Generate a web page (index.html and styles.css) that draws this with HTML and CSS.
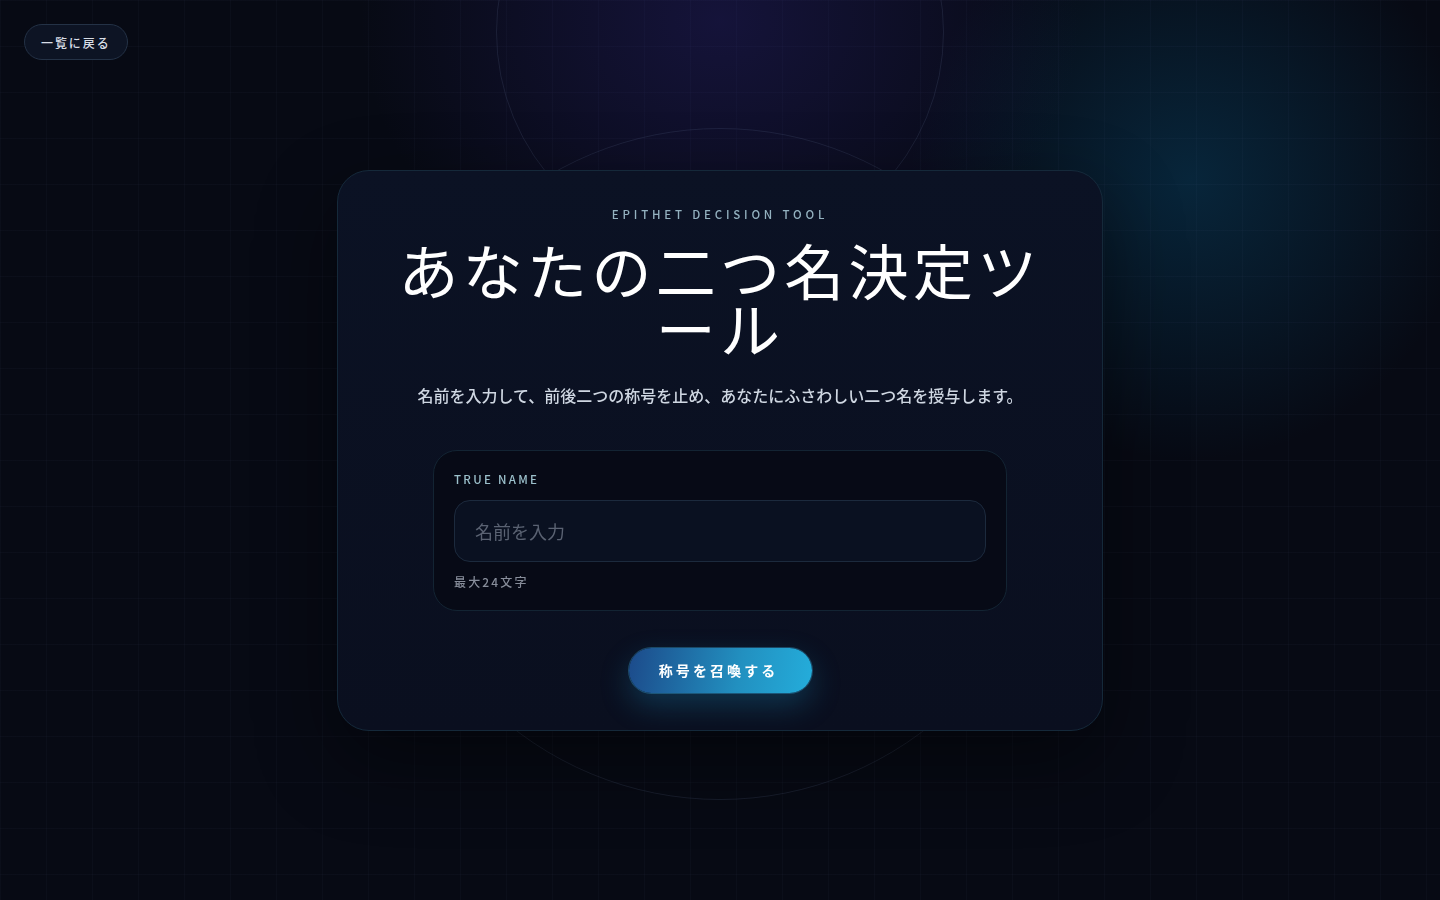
FILE: index.html
```html
<!DOCTYPE html>
<html lang="ja">
<head>
    <meta charset="UTF-8">
    <meta name="viewport" content="width=device-width, initial-scale=1.0">
    <title>あなたの二つ名決定ツール</title>
    <link rel="stylesheet" href="styles.css">
</head>
<body>

  <div class="backdrop">
    <div class="ring ring-top"></div>
    <div class="ring ring-mid"></div>
  </div>

  <a href="#" class="back-link">一覧に戻る</a>

  <main class="page">
    <section class="card">
      <p class="eyebrow">EPITHET DECISION TOOL</p>
      <h1>あなたの二つ名決定ツール</h1>
      <p class="lead">名前を入力して、前後二つの称号を止め、あなたにふさわしい二つ名を授与します。</p>

      <div class="name-panel">
        <label for="trueName">TRUE NAME</label>
        <input type="text" id="trueName" name="trueName" maxlength="24" placeholder="名前を入力">
        <p class="hint">最大24文字</p>
      </div>

      <button type="button" class="summon">称号を召喚する</button>
    </section>
  </main>

</body>
</html>
```

FILE: styles.css
```css
* {
    box-sizing: border-box;
}

html, body {
    margin: 0;
    height: 100%;
}

body {
    font-family: "Noto Sans CJK JP", "Noto Sans", sans-serif;
    color: #e8edf4;
    background-color: #070a14;
    background-image:
        linear-gradient(rgba(120, 140, 200, 0.035) 1px, transparent 1px),
        linear-gradient(90deg, rgba(120, 140, 200, 0.035) 1px, transparent 1px),
        radial-gradient(ellipse 360px 300px at 720px 20px, rgba(40, 32, 110, 0.42), transparent 100%),
        radial-gradient(ellipse 280px 280px at 1190px 180px, rgba(8, 60, 90, 0.55), transparent 100%);
    background-size: 46px 46px, 46px 46px, 100% 100%, 100% 100%;
    overflow: hidden;
}

/* decorative rings behind the card */
.backdrop {
    position: fixed;
    inset: 0;
    pointer-events: none;
}

.ring {
    position: absolute;
    border-radius: 50%;
    border: 1px solid rgba(110, 130, 170, 0.16);
}

.ring-top {
    left: 496px;
    top: -192px;
    width: 448px;
    height: 448px;
}

.ring-mid {
    left: 384px;
    top: 128px;
    width: 672px;
    height: 672px;
}

.back-link {
    position: fixed;
    top: 24px;
    left: 24px;
    z-index: 2;
    display: inline-flex;
    align-items: center;
    height: 36px;
    padding: 0 16px;
    border-radius: 18px;
    background: #0d1424;
    border: 1px solid #243246;
    color: #d8dee6;
    font-size: 12px;
    font-weight: 500;
    letter-spacing: 0.16em;
    text-decoration: none;
}

.page {
    position: relative;
    z-index: 1;
    min-height: 100vh;
    display: flex;
    align-items: center;
    justify-content: center;
}

.card {
    width: 766px;
    padding: 35px 48px 37px;
    border-radius: 32px;
    background: linear-gradient(180deg, #0b1224 0%, #0a0f1f 100%);
    border: 1px solid #15293a;
    box-shadow: 0 30px 80px rgba(0, 0, 0, 0.45);
    display: flex;
    flex-direction: column;
    align-items: center;
    text-align: center;
}

.eyebrow {
    margin: 0;
    font-size: 11.5px;
    line-height: 16px;
    font-weight: 500;
    letter-spacing: 0.33em;
    color: #94b2c0;
}

h1 {
    margin: 18px 0 0;
    font-size: 60px;
    line-height: 58px;
    font-weight: 400;
    letter-spacing: 4.3px;
    color: #ffffff;
}

.lead {
    margin: 27px 0 0;
    font-size: 16px;
    line-height: 24px;
    font-weight: 500;
    color: #cfd7e2;
}

.name-panel {
    margin-top: 43px;
    width: 574px;
    padding: 20px;
    border-radius: 24px;
    background: #070a16;
    border: 1px solid #132433;
    text-align: left;
    display: flex;
    flex-direction: column;
}

.name-panel label {
    font-size: 11.5px;
    line-height: 16px;
    font-weight: 500;
    letter-spacing: 0.2em;
    color: #9cc1cc;
}

.name-panel input {
    margin-top: 13px;
    height: 62px;
    padding: 0 20px;
    border-radius: 16px;
    border: 1px solid #1c2a3d;
    background: #0a1121;
    color: #e8edf4;
    font-family: inherit;
    font-size: 18px;
    outline: none;
}

.name-panel input::placeholder {
    color: #5a6272;
}

.hint {
    margin: 12px 0 0;
    font-size: 12px;
    line-height: 16px;
    font-weight: 500;
    letter-spacing: 0.18em;
    color: #878d9a;
}

.summon {
    margin-top: 37px;
    width: 183px;
    height: 45px;
    border: none;
    border-radius: 23px;
    background: linear-gradient(100deg, #1c4a8a 0%, #2290c0 60%, #24addb 100%);
    box-shadow: 0 0 0 1px rgba(60, 170, 220, 0.35), 0 12px 30px rgba(30, 150, 200, 0.28);
    color: #ffffff;
    font-family: inherit;
    font-size: 14px;
    font-weight: 700;
    letter-spacing: 0.22em;
    padding-left: 0.22em;
    cursor: pointer;
}
```
